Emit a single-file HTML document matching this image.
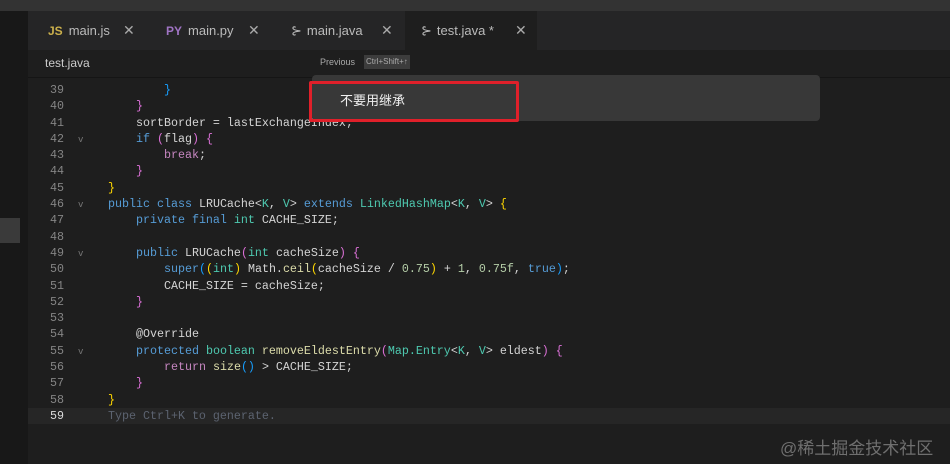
<!DOCTYPE html>
<html><head><meta charset="utf-8"><style>
body{margin:0;width:950px;height:464px;background:#1e1e1e;overflow:hidden;position:relative;font-family:"Liberation Sans","Noto Sans CJK SC",sans-serif}
.top{position:absolute;left:0;top:0;width:950px;height:11px;background:#333}
.side{position:absolute;left:0;top:11px;width:28px;height:453px;background:#181818}
.side .h{position:absolute;left:0;top:207px;width:20px;height:25px;background:#3a3a3a}
.tabs{position:absolute;left:28px;top:11px;width:922px;height:39px;background:#252526}
.tab{position:absolute;top:0;height:39px;line-height:39px;font-size:13px;color:#bbb}
.tab b{font-weight:bold;font-size:12px;margin-right:6px}
.tab .x{position:absolute;font-size:14px;color:#aaa}
.crumb{position:absolute;left:28px;top:50px;width:922px;height:27px;background:#1e1e1e;border-bottom:1px solid #151515}
.code{position:absolute;left:28px;top:82px;width:922px;font-family:"Liberation Mono",monospace;font-size:11.67px}
.l{height:16.3px;line-height:16.3px;white-space:pre;position:relative}
.n{display:inline-block;width:36px;text-align:right;color:#858585}
.f{display:inline-block;width:44px;color:#777;font-size:9px;text-indent:14px}
.c{color:#d4d4d4}
.k{color:#569cd6}.t{color:#4ec9b0}.y{color:#ffd700}.p{color:#da70d6}.bl{color:#179fff}.m{color:#dcdcaa}.num{color:#b5cea8}.cm{color:#5c6370}.ret{color:#c586c0}
</style></head><body>
<div class="top"></div>
<div class="side"><div class="h"></div></div>
<div class="tabs">
 <div class="tab" style="left:20px"><b style="color:#cbb04c">JS</b>main.js<span class="x" style="left:75px">✕</span></div>
 <div class="tab" style="left:138px"><b style="color:#a074c4">PY</b>main.py<span class="x" style="left:82px">✕</span></div>
 <div class="tab" style="left:263px"><span style="color:#bbb;margin-right:5px">⊱</span>main.java<span class="x" style="left:90px">✕</span></div>
 <div class="tab" style="left:377px;width:132px;background:#1e1e1e"><span style="color:#bbb;margin:0 5px 0 16px">⊱</span>test.java *<span class="x" style="left:110px">✕</span></div>
</div>
<div class="crumb"><span style="position:absolute;left:17px;top:6px;font-size:12px;color:#ccc">test.java</span>
<span style="position:absolute;left:292px;top:7px;font-size:9px;color:#aaa">Previous</span>
<span style="position:absolute;left:336px;top:5px;height:14px;line-height:14px;padding:0 2px;font-size:8px;color:#aaa;background:#3c3c3c">Ctrl+Shift+↑</span></div>
<div class="code">
<div class="l"><span class="n">39</span><span class="f"></span>        <span class="bl">}</span></div>
<div class="l"><span class="n">40</span><span class="f"></span>    <span class="p">}</span></div>
<div class="l"><span class="n">41</span><span class="f"></span>    <span class="c">sortBorder = lastExchangeIndex;</span></div>
<div class="l"><span class="n">42</span><span class="f">v</span>    <span class="k">if</span> <span class="p">(</span><span class="c">flag</span><span class="p">)</span> <span class="p">{</span></div>
<div class="l"><span class="n">43</span><span class="f"></span>        <span class="ret">break</span><span class="c">;</span></div>
<div class="l"><span class="n">44</span><span class="f"></span>    <span class="p">}</span></div>
<div class="l"><span class="n">45</span><span class="f"></span><span class="y">}</span></div>
<div class="l"><span class="n">46</span><span class="f">v</span><span class="k">public class</span> <span class="c">LRUCache</span><span class="c">&lt;</span><span class="t">K</span><span class="c">, </span><span class="t">V</span><span class="c">&gt;</span> <span class="k">extends</span> <span class="t">LinkedHashMap</span><span class="c">&lt;</span><span class="t">K</span><span class="c">, </span><span class="t">V</span><span class="c">&gt;</span> <span class="y">{</span></div>
<div class="l"><span class="n">47</span><span class="f"></span>    <span class="k">private final</span> <span class="t">int</span> <span class="c">CACHE_SIZE;</span></div>
<div class="l"><span class="n">48</span><span class="f"></span></div>
<div class="l"><span class="n">49</span><span class="f">v</span>    <span class="k">public</span> <span class="c">LRUCache</span><span class="p">(</span><span class="t">int</span> <span class="c">cacheSize</span><span class="p">)</span> <span class="p">{</span></div>
<div class="l"><span class="n">50</span><span class="f"></span>        <span class="k">super</span><span class="bl">(</span><span class="y">(</span><span class="t">int</span><span class="y">)</span> <span class="c">Math.</span><span class="m">ceil</span><span class="y">(</span><span class="c">cacheSize / </span><span class="num">0.75</span><span class="y">)</span><span class="c"> + </span><span class="num">1</span><span class="c">, </span><span class="num">0.75f</span><span class="c">, </span><span class="k">true</span><span class="bl">)</span><span class="c">;</span></div>
<div class="l"><span class="n">51</span><span class="f"></span>        <span class="c">CACHE_SIZE = cacheSize;</span></div>
<div class="l"><span class="n">52</span><span class="f"></span>    <span class="p">}</span></div>
<div class="l"><span class="n">53</span><span class="f"></span></div>
<div class="l"><span class="n">54</span><span class="f"></span>    <span class="c">@Override</span></div>
<div class="l"><span class="n">55</span><span class="f">v</span>    <span class="k">protected</span> <span class="t">boolean</span> <span class="m">removeEldestEntry</span><span class="p">(</span><span class="t">Map.Entry</span><span class="c">&lt;</span><span class="t">K</span><span class="c">, </span><span class="t">V</span><span class="c">&gt;</span> <span class="c">eldest</span><span class="p">)</span> <span class="p">{</span></div>
<div class="l"><span class="n">56</span><span class="f"></span>        <span class="ret">return</span> <span class="m">size</span><span class="bl">()</span> <span class="c">&gt; CACHE_SIZE;</span></div>
<div class="l"><span class="n">57</span><span class="f"></span>    <span class="p">}</span></div>
<div class="l"><span class="n">58</span><span class="f"></span><span class="y">}</span></div>
<div class="l" style="background:#262626"><span class="n" style="color:#ddd">59</span><span class="f"></span><span class="cm">Type Ctrl+K to generate.</span></div>
</div>
<div style="position:absolute;left:312px;top:75px;width:508px;height:46px;background:#383838;border-radius:4px"></div>
<div style="position:absolute;left:309px;top:81px;width:204px;height:35px;border:3px solid #e0202a;border-radius:2px"></div>
<div style="position:absolute;left:340px;top:90px;font-size:13px;color:#f0f0f0">不要用继承</div>
<div style="position:absolute;left:780px;top:434px;font-size:17px;color:#6f6f6f">@稀土掘金技术社区</div>
</body></html>
